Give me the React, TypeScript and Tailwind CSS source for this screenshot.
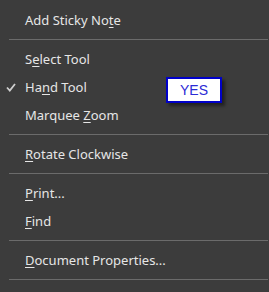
import React from "react";

type Entry = { label: string; key: number; checked?: boolean } | "sep";

const entries: Entry[] = [
  { label: "Add Sticky Note", key: 13 },
  "sep",
  { label: "Select Tool", key: 1 },
  { label: "Hand Tool", key: 2, checked: true },
  { label: "Marquee Zoom", key: 8 },
  "sep",
  { label: "Rotate Clockwise", key: 0 },
  "sep",
  { label: "Print...", key: 0 },
  { label: "Find", key: 0 },
  "sep",
  { label: "Document Properties...", key: 0 },
  "sep",
];

const Label = ({ text, at }: { text: string; at: number }) => (
  <span>
    {text.slice(0, at)}
    <span className="underline underline-offset-[2px]">{text[at]}</span>
    {text.slice(at + 1)}
  </span>
);

const App = () => {
  return (
    <div
      className="relative w-[269px] h-[292px] overflow-hidden bg-[#3c3c3c] pt-[6px] text-[13px] text-[#e6e6e6]"
      style={{ fontFamily: '"Segoe UI", "Noto Sans", "Open Sans", sans-serif' }}
    >
      {entries.map((e, i) =>
        e === "sep" ? (
          <div key={i} className="ml-[9px] mr-[1px] my-[5px] h-px bg-[#6b6b6b]" />
        ) : (
          <div key={i} className="relative h-[28px] flex items-center pl-[25px] pt-[2px]">
            {e.checked && (
              <svg
                className="absolute left-[6px] top-[10px]"
                width="10"
                height="9"
                viewBox="0 0 10 9"
              >
                <path d="M1 4.5 L3.8 7.5 L9 1" fill="none" stroke="#cfcfcf" strokeWidth="1.8" />
              </svg>
            )}
            <Label text={e.label} at={e.key} />
          </div>
        )
      )}
      <div className="absolute left-[166px] top-[77px] w-[56px] h-[26px] bg-white border-2 border-[#0000c8] shadow-[3px_3px_3px_rgba(0,0,0,0.45)] flex items-center justify-center">
        <span
          className="text-[14px] text-[#2b2bd6]"
          style={{ fontFamily: '"Liberation Sans", Arial, sans-serif' }}
        >
          YES
        </span>
      </div>
    </div>
  );
};

export default App;
